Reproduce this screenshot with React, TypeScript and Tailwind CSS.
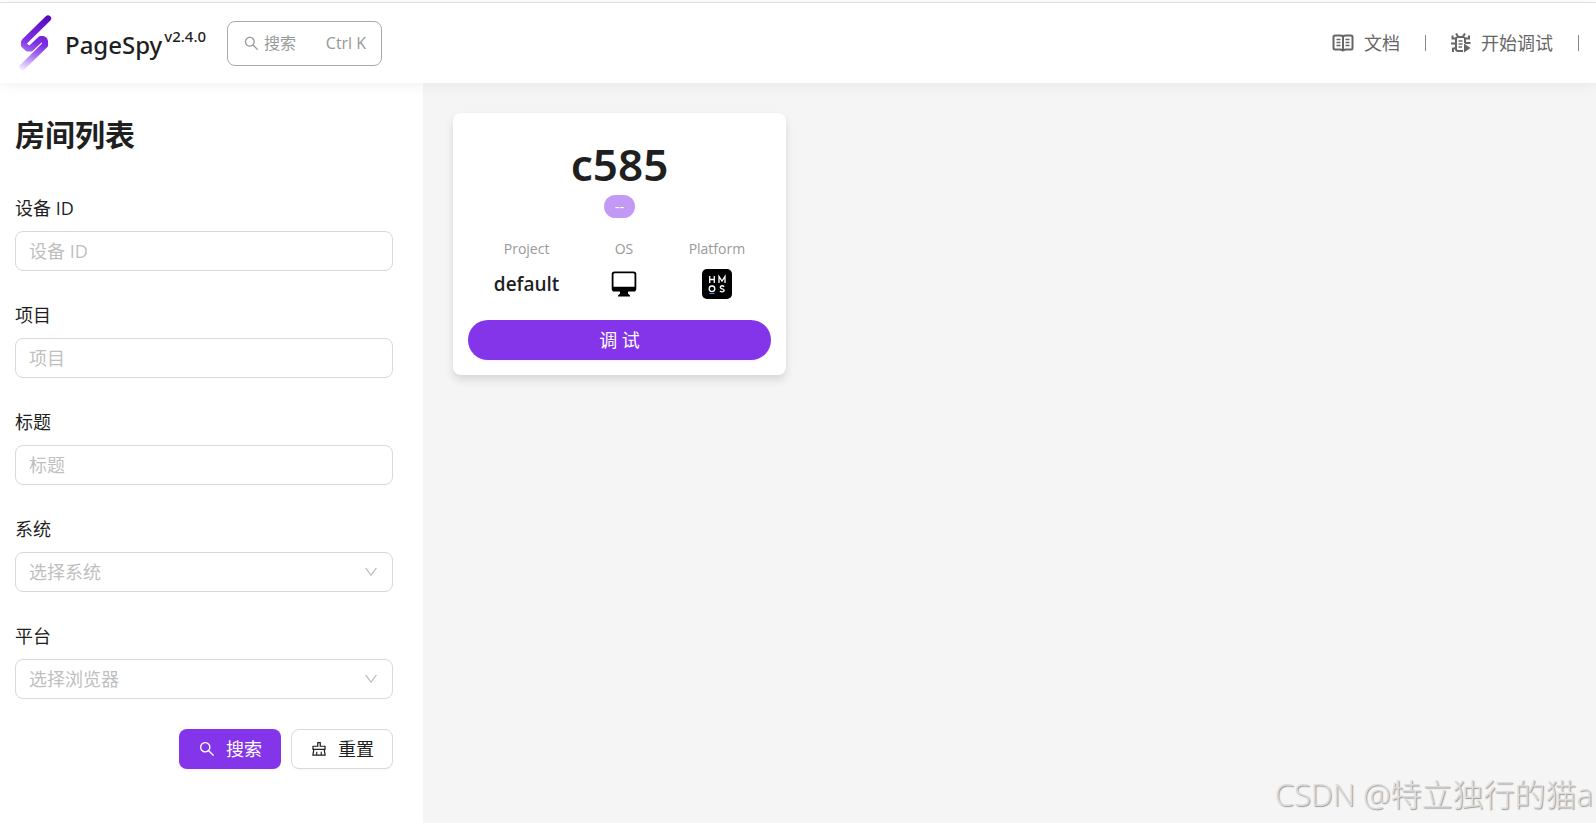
import { ReactNode } from "react";
import { AiOutlineClear, AiOutlineDown, AiOutlineSearch } from "react-icons/ai";

function Logo() {
  return (
    <svg viewBox="0 0 34 58" className="h-[58px] w-[34px]" fill="none" aria-hidden="true">
      <defs>
        <linearGradient id="logo" x1="30" y1="2" x2="10" y2="58" gradientUnits="userSpaceOnUse">
          <stop offset="0" stopColor="#5606c0" />
          <stop offset="0.5" stopColor="#8030e6" />
          <stop offset="0.68" stopColor="#a06aec" />
          <stop offset="1" stopColor="#f6effe" />
        </linearGradient>
      </defs>
      <path
        d="M30 4.500 L6.500 27.500 Q6 28 6 29 V31 L9.500 34.300 H13 L22.500 25.200 H25 Q27 26 27 28.500 V31 L4.500 53"
        stroke="url(#logo)"
        strokeWidth="6.200"
        strokeLinecap="round"
        strokeLinejoin="round"
      />
    </svg>
  );
}

function BookIcon() {
  return (
    <svg viewBox="0 0 22 18" className="h-[18px] w-[22px]" fill="none" stroke="currentColor" strokeWidth="2" aria-hidden="true">
      <path d="M11 2.500 Q10 1.500 8 1.500 H3 Q1.500 1.500 1.500 3 V14 Q1.500 15.500 3 15.500 H8.500 L11 16.500 L13.500 15.500 H19 Q20.500 15.500 20.500 14 V3 Q20.500 1.500 19 1.500 H14 Q12 1.500 11 2.500 Z M11 3 V16" />
      <path d="M4.500 5.500 H8.500 M4.500 8.500 H8.500 M4.500 11.500 H8.500 M13.500 5.500 H17.500 M13.500 8.500 H17.500 M13.500 11.500 H17.500" strokeWidth="1.500" />
    </svg>
  );
}

function BugIcon() {
  return (
    <svg viewBox="0 0 20 20" className="h-5 w-5" fill="none" stroke="currentColor" strokeWidth="2" aria-hidden="true">
      <path d="M5 0.500 L7 3.500 M14 0.500 L12 3.500 M1.500 2.500 V5.500 H5 M18 2.500 V5.500 H14 M5 6 Q5 4 7 4 H12 Q14 4 14 6 V10 M5 6 V16 Q5 18 7 18 H12 M0 10.500 H5 M14 10 H19.500 M5 15 L2 15.500 V19" />
      <path d="M7.500 8 H11.500 M7.500 11 H11.500 M7.500 14 H11" strokeWidth="1.500" />
      <path d="M13 10.500 L19.500 15 L13 19.500 Z" fill="currentColor" stroke="none" />
    </svg>
  );
}

function MonitorIcon() {
  return (
    <svg viewBox="0 0 26 26" className="h-[26px] w-[26px]" aria-hidden="true">
      <path
        fillRule="evenodd"
        d="M3.500 0.500 H22.500 Q25.300 0.500 25.300 3.300 V17.700 Q25.300 20.500 22.500 20.500 H17 V22.500 L19 24.500 V25.500 H7 V24.500 L9 22.500 V20.500 H3.500 Q0.700 20.500 0.700 17.700 V3.300 Q0.700 0.500 3.500 0.500 Z M3.800 2.300 Q2.500 2.300 2.500 3.500 V15.700 H23.500 V3.500 Q23.500 2.300 22.200 2.300 Z"
      />
    </svg>
  );
}

function HmosIcon() {
  return (
    <svg viewBox="0 0 30 30" className="h-[30px] w-[30px]" aria-label="HMOS" role="img">
      <rect width="30" height="30" rx="5" fill="#000" />
      <g fill="none" stroke="#fff" strokeWidth="1.300">
        <path d="M7.700 7 V14 M12.300 7 V14 M7.700 10.500 H12.300 M17 14 V7.500 L20 12 L23 7.500 V14" />
        <circle cx="10" cy="19.800" r="2.800" />
        <path d="M22.200 17.700 Q20 16 18.500 17.500 Q17.800 19.200 20 19.800 Q22.700 20.500 22 22 Q20.200 23.800 17.800 22" />
      </g>
      <path d="M7.500 24.500 H12.500" stroke="#4b87f5" strokeWidth="1" />
    </svg>
  );
}

const fieldBox =
  "h-10 w-full rounded-lg border border-[#d9d9d9] bg-white px-[13px] text-lg outline-none focus:border-[#8434e9]";

function Field({ id, label, children }: { id: string; label: string; children: ReactNode }) {
  return (
    <div className="mb-[30px]">
      <label htmlFor={id} className="mb-[9px] block text-lg leading-7">
        {label}
      </label>
      {children}
    </div>
  );
}

function TextField({ id, label }: { id: string; label: string }) {
  return (
    <Field id={id} label={label}>
      <input id={id} type="text" placeholder={label} className={`${fieldBox} placeholder:text-[#bfbfbf]`} />
    </Field>
  );
}

function SelectField({ id, label, placeholder }: { id: string; label: string; placeholder: string }) {
  return (
    <Field id={id} label={label}>
      <div className="relative">
        <select id={id} defaultValue="" className={`${fieldBox} appearance-none text-[#bfbfbf]`}>
          <option value="">{placeholder}</option>
        </select>
        <AiOutlineDown className="pointer-events-none absolute right-[14px] top-3 size-4 text-[#bfbfbf]" />
      </div>
    </Field>
  );
}

function Stat({ label, children }: { label: string; children: ReactNode }) {
  return (
    <div className="flex flex-col items-center gap-2">
      <dt className="text-sm leading-6 text-[#999]">{label}</dt>
      <dd className="flex h-[30px] items-center text-[19px] font-semibold">{children}</dd>
    </div>
  );
}

function Divider() {
  return <span className="h-4 w-px bg-[#888]" />;
}

export default function App() {
  return (
    <div className="flex min-h-screen flex-col bg-white font-['Open_Sans','Noto_Sans_CJK_SC',sans-serif] text-[#1f1f1f]">
      <header className="relative z-10 mt-[2px] flex h-[81px] items-center border-t border-[#e0e0e0] bg-white pl-[18px] pr-[17px] shadow-[0_2px_14px_rgba(0,0,0,0.06)]">
        <a href="#home" className="flex items-center font-['Noto_Sans',sans-serif] font-medium">
          <Logo />
          <span className="ml-[13px] pt-1 text-2xl">PageSpy</span>
          <span className="mb-[14px] ml-[2px] text-[15px] leading-5">v2.4.0</span>
        </a>
        <button
          type="button"
          className="ml-[21px] flex h-[45px] w-[155px] items-center rounded-lg border border-[#aaa] px-[15px] text-base text-[#999]"
        >
          <AiOutlineSearch className="mr-1 size-[17px]" />
          <span>搜索</span>
          <span className="ml-auto">Ctrl K</span>
        </button>
        <nav className="ml-auto flex items-center gap-[25px] text-lg text-[#666]">
          <a href="#docs" className="flex items-center gap-[10px]">
            <BookIcon />
            文档
          </a>
          <Divider />
          <a href="#debug" className="flex items-center gap-[10px]">
            <BugIcon />
            开始调试
          </a>
          <Divider />
        </nav>
      </header>

      <div className="flex flex-1">
        <aside className="w-[423px] shrink-0 pl-[15px] pr-[30px] pt-[30px]">
          <h1 className="mb-[38px] text-3xl font-bold leading-[43px]">房间列表</h1>
          <form>
            <TextField id="device" label="设备 ID" />
            <TextField id="project" label="项目" />
            <TextField id="title" label="标题" />
            <SelectField id="os" label="系统" placeholder="选择系统" />
            <SelectField id="platform" label="平台" placeholder="选择浏览器" />
            <div className="flex justify-end gap-[10px] text-lg">
              <button
                type="button"
                className="flex h-10 w-[102px] items-center justify-center gap-[10px] rounded-lg bg-[#8434e9] text-white shadow-[0_2px_0_rgba(132,52,233,0.05)]"
              >
                <AiOutlineSearch className="size-[18px]" />
                搜索
              </button>
              <button
                type="reset"
                className="flex h-10 w-[102px] items-center justify-center gap-[10px] rounded-lg border border-[#d9d9d9] bg-white shadow-[0_2px_0_rgba(0,0,0,0.02)]"
              >
                <AiOutlineClear className="size-[18px]" />
                重置
              </button>
            </div>
          </form>
        </aside>

        <main className="flex flex-1 flex-col bg-[#f5f5f5] pl-[30px] pt-[30px]">
          <article className="w-[333px] rounded-lg bg-white p-[15px] shadow-[0_5px_8px_rgba(0,0,0,0.12)]">
            <h2 className="mt-[6px] text-center font-['Noto_Sans',sans-serif] text-[44px] font-semibold leading-[60px]">c585</h2>
            <div className="mt-px flex justify-center">
              <span className="h-[23px] rounded-full bg-[#c299f5] px-[11px] text-[15px] leading-[23px] text-white">--</span>
            </div>
            <dl className="mb-[21px] mt-[19px] flex justify-around">
              <Stat label="Project">default</Stat>
              <Stat label="OS">
                <MonitorIcon />
              </Stat>
              <Stat label="Platform">
                <HmosIcon />
              </Stat>
            </dl>
            <button
              type="button"
              className="h-10 w-full rounded-full bg-[#8434e9] text-lg text-white shadow-[0_2px_0_rgba(132,52,233,0.05)]"
            >
              调 试
            </button>
          </article>
          <p className="mt-auto pb-[6px] pr-[3px] text-right text-[31px] font-light leading-[46px] text-[#ddd] [text-shadow:1px_1px_1px_#999]">
            CSDN @特立独行的猫a
          </p>
        </main>
      </div>
    </div>
  );
}
